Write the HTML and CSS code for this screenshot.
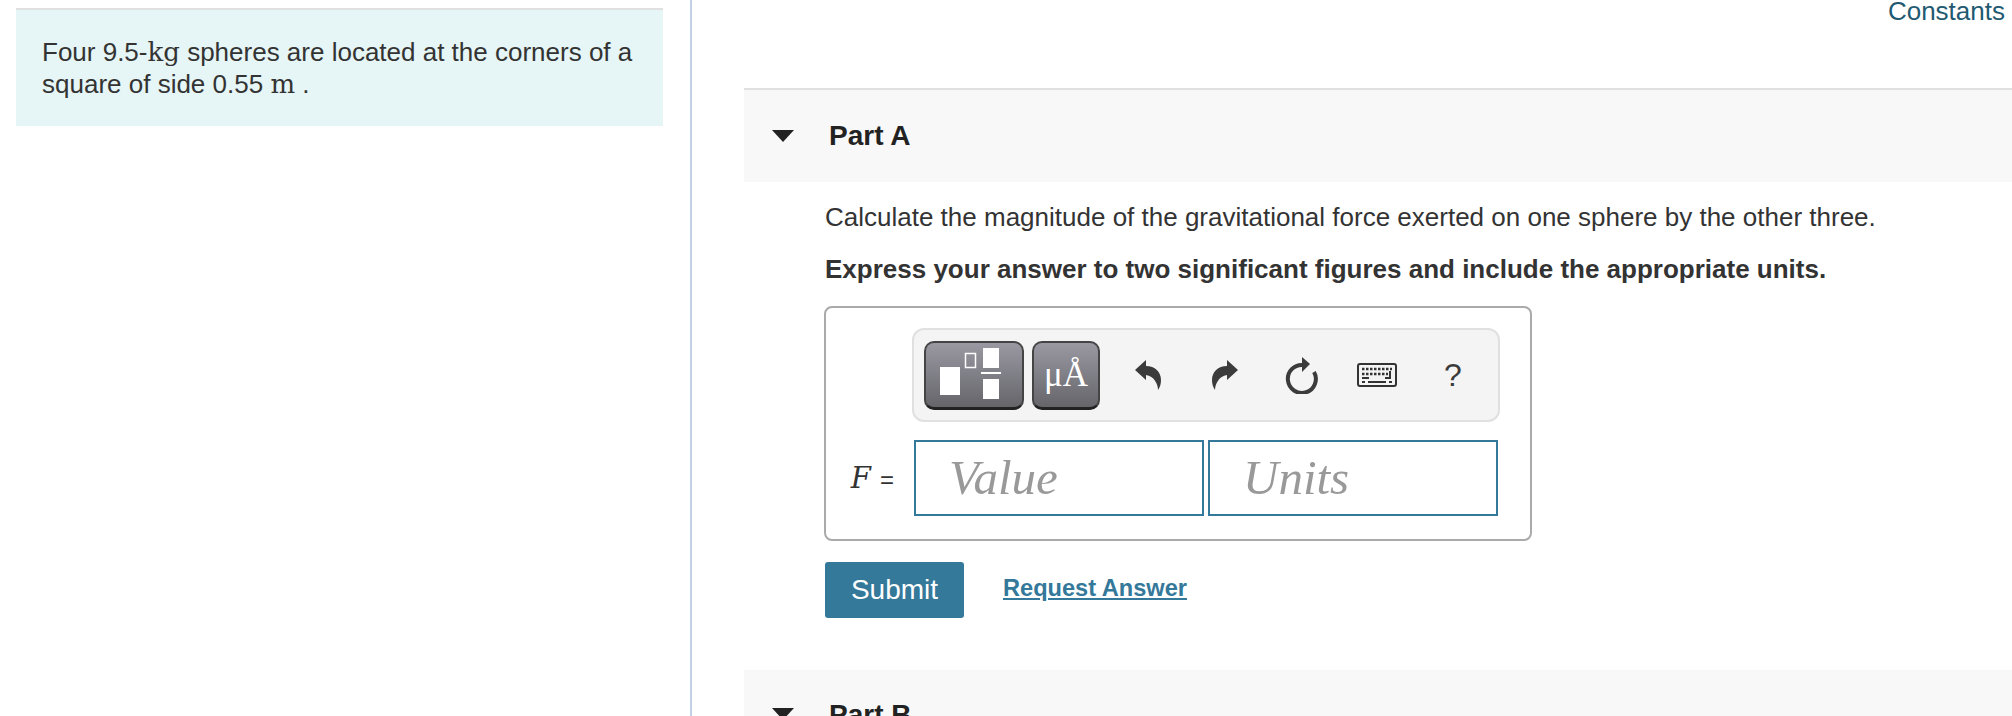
FILE: index.html
```html
<!DOCTYPE html>
<html>
<head>
    <meta charset="UTF-8">
    <title>Part A</title>
    <link rel="stylesheet" href="styles.css">
</head>
<body>
    <div id="app">
        <div class="intro">
            <div class="intro-box">
                Four 9.5-<span class="math">kg</span> spheres are located at the corners of a square of side 0.55 <span class="math">m</span> .
            </div>
        </div>
        <div class="main">
            <div class="constants"><a href="#">Constants</a></div>

            <div class="part-head">
                <span class="arrow"></span>
                <span class="part-title">Part A</span>
            </div>
            <div class="part-body">
                <p class="question">Calculate the magnitude of the gravitational force exerted on one sphere by the other three.</p>
                <p class="question-bold">Express your answer to two significant figures and include the appropriate units.</p>

                <div class="answer">
                    <div class="toolbar">
                        <button class="tool tool-frac">
                            <svg width="100" height="67" viewBox="0 0 100 67">
                                <rect x="16" y="26" width="20" height="28" fill="#fff"/>
                                <rect x="41.500" y="12.500" width="10" height="14" fill="none" stroke="#fff" stroke-width="1.500"/>
                                <rect x="59" y="7" width="16" height="20" fill="#fff"/>
                                <rect x="57" y="31" width="20" height="2" fill="#fff"/>
                                <rect x="59" y="38" width="16" height="20" fill="#fff"/>
                            </svg>
                        </button>
                        <button class="tool tool-unit"><span class="unit-text">μÅ</span></button>
                        <div class="tool-icons">
                            <svg class="icon" width="28" height="32" viewBox="0 0 28 32">
                                <path d="M1 11 L12 1 L12 7 C21 7 27 13 27 21 C27 25 26 28 24 31 C24 25 20 17 12 16 L12 21 Z" fill="#3b3b3b"/>
                            </svg>
                            <svg class="icon" width="28" height="32" viewBox="0 0 28 32">
                                <path d="M27 11 L16 1 L16 7 C7 7 1 13 1 21 C1 25 2 28 4 31 C4 25 8 17 16 16 L16 21 Z" fill="#3b3b3b"/>
                            </svg>
                            <svg class="icon" width="34" height="38" viewBox="0 0 34 38">
                                <path d="M18 9 A14 14 0 1 0 29 16" fill="none" stroke="#3b3b3b" stroke-width="4"/>
                                <path d="M17 1 L25 8 L17 16 Z" fill="#3b3b3b"/>
                            </svg>
                            <svg class="icon" width="40" height="24" viewBox="0 0 40 24">
                                <rect x="1" y="1" width="38" height="22" rx="2" fill="#f4f4f4" stroke="#333" stroke-width="2"/>
                                <path d="M5 6 H35 M5 11 H31" stroke="#333" stroke-width="2.500" stroke-dasharray="2.500 1.500" fill="none"/>
                                <path d="M5 15 H12 M33 8 V15 H28 M11 19 H29 M5 19 H8 M32 19 H35" stroke="#333" stroke-width="2" fill="none"/>
                            </svg>
                            <span class="help">?</span>
                        </div>
                    </div>
                    <div class="answer-row">
                        <span class="answer-label"><i>F</i> <span class="equals">=</span></span>
                        <div class="answer-input">Value</div>
                        <div class="answer-input">Units</div>
                    </div>
                </div>

                <div class="actions">
                    <button class="submit">Submit</button>
                    <a class="request" href="#">Request Answer</a>
                </div>
            </div>

            <div class="part-head part-next">
                <span class="arrow"></span>
                <span class="part-title">Part B</span>
            </div>
        </div>
    </div>
</body>
</html>
```

FILE: styles.css
```css
* {
  margin: 0px;
  padding: 0px;
  box-sizing: border-box;
}
html, body {
  height: 100%;
  overflow: hidden;
  background: #fff;
}
body {
  font-family: "Liberation Sans", Arial, sans-serif;
  color: #333;
}
#app {
  display: flex;
  height: 716px;
  overflow: hidden;
}
.intro {
  width: 692px;
  flex-shrink: 0;
  padding: 8px 27px 0px 16px;
  border-right: 2px solid #c3d1e4;
}
.intro-box {
  height: 118px;
  padding: 26px 26px 0px 26px;
  background: #e6f5f5;
  border-top: 2px solid #e0e0e0;
  font-size: 26px;
  line-height: 32px;
}
.math {
  font-family: "DejaVu Serif", serif;
  font-size: 26px;
  line-height: 20px;
}
.main {
  flex: 1;
  padding-left: 52px;
}
.constants {
  height: 88px;
  text-align: right;
  padding-right: 7px;
  font-size: 26px;
  line-height: 22px;
}
.constants a {
  color: #1f5a72;
  text-decoration: none;
}
.part-head {
  display: flex;
  align-items: center;
  height: 94px;
  background: #f8f8f8;
  border-top: 2px solid #e0e0e0;
}
.part-next {
  border-top: 0px;
  height: 92px;
  margin-top: 52px;
  align-items: flex-start;
  padding-top: 29px;
}
.part-next .arrow {
  margin-top: 9px;
}
.arrow {
  width: 0px;
  height: 0px;
  margin-left: 28px;
  border-left: 11px solid transparent;
  border-right: 11px solid transparent;
  border-top: 12px solid #222;
}
.part-title {
  margin-left: 35px;
  font-size: 28px;
  font-weight: bold;
  color: #222;
}
.part-body {
  padding: 0px 0px 0px 81px;
}
.question {
  margin-top: 19px;
  font-size: 26px;
  line-height: 32px;
}
.question-bold {
  margin-top: 20px;
  font-size: 26px;
  line-height: 32px;
  font-weight: bold;
}
.answer {
  width: 708px;
  height: 235px;
  margin-top: 21px;
  margin-left: -1px;
  padding: 20px 30px 0px 86px;
  border: 2px solid #aaa;
  border-radius: 8px;
}
.toolbar {
  display: flex;
  align-items: center;
  height: 94px;
  padding-left: 10px;
  background: #f4f4f4;
  border: 2px solid #e0e0e0;
  border-radius: 12px;
}
.tool {
  height: 69px;
  background: linear-gradient(#9a99a3, #65656a);
  border: 2px solid #444;
  border-bottom: 3px solid #222;
  border-radius: 10px;
}
.tool-frac {
  width: 100px;
}
.tool-frac svg {
  display: block;
  margin: -2px;
}
.tool-unit {
  width: 68px;
  margin-left: 8px;
}
.unit-text {
  font-family: "Liberation Serif", serif;
  font-size: 35px;
  color: #fff;
}
.tool-icons {
  flex: 1;
  display: flex;
  align-items: center;
}
.icon {
  flex-shrink: 0;
}
.tool-icons .icon:nth-child(1) {
  margin-left: 34px;
}
.tool-icons .icon:nth-child(2) {
  margin-left: 49px;
}
.tool-icons .icon:nth-child(3) {
  margin-left: 46px;
}
.tool-icons .icon:nth-child(4) {
  margin-left: 38px;
}
.help {
  margin-left: 47px;
  font-size: 32px;
  color: #3b3b3b;
}
.answer-row {
  display: flex;
  align-items: center;
  margin-top: 18px;
  margin-left: -86px;
  gap: 4px;
}
.answer-label {
  width: 84px;
  padding-right: 16px;
  text-align: right;
  font-family: "DejaVu Serif", serif;
  font-size: 29px;
}
.equals {
  font-family: "Liberation Sans", sans-serif;
  font-size: 24px;
}
.answer-input {
  width: 290px;
  height: 76px;
  padding-left: 33px;
  border: 2px solid #34789a;
  font-family: "Liberation Serif", serif;
  font-style: italic;
  font-size: 49px;
  line-height: 72px;
  color: #999;
}
.actions {
  display: flex;
  align-items: center;
  margin-top: 21px;
}
.submit {
  width: 139px;
  height: 56px;
  background: #34789a;
  border: 0px;
  border-radius: 3px;
  color: #fff;
  font-family: "Liberation Sans", sans-serif;
  font-size: 28px;
}
.request {
  margin-left: 39px;
  margin-top: -4px;
  color: #34789a;
  font-size: 23.600px;
  font-weight: bold;
}
```
